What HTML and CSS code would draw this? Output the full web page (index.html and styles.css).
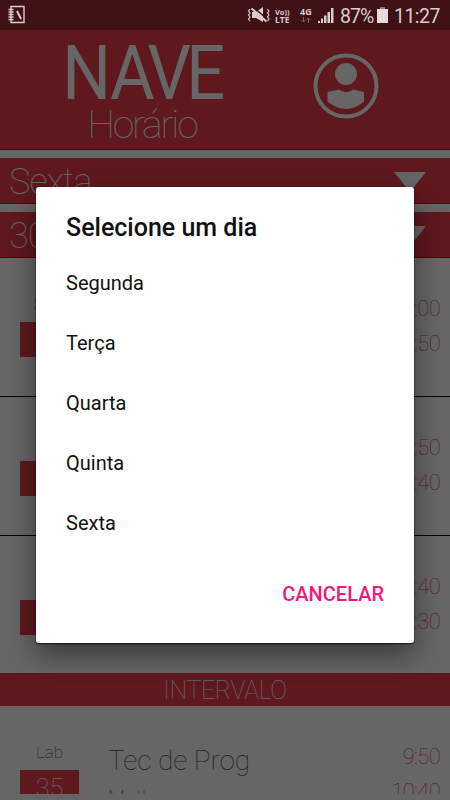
FILE: index.html
```
<!DOCTYPE html>
<html lang="pt-BR">
<head>
  <meta charset="UTF-8">
  <title>NAVE Horário</title>
  <link rel="stylesheet" href="styles.css">
</head>
<body>
  <div class="status">
    <svg class="note" width="18" height="20" viewBox="0 0 18 20" fill="none" stroke="#d9cccd">
      <path d="M3 1.500h13v16h-13z" stroke-width="1.400"/>
      <path d="M0.500 4.500h5M0.500 7h5M0.500 9.500h5M0.500 12h5M0.500 14.500h5" stroke-width="1.500"/>
      <path d="M9 6l4 8" stroke-width="2"/>
    </svg>
    <svg class="mute" width="24" height="18" viewBox="0 0 24 18">
      <path d="M5 6h4l7-5v15l-7-4h-4z" fill="#d9cccd"/>
      <path d="M6 1l14 12" stroke="#3f1115" stroke-width="1.500"/>
      <path d="M4.500 2.500l15 13" stroke="#d9cccd" stroke-width="2"/>
      <path d="M3 3l-1.500 2 1.500 2-1.500 2 1.500 2-1.500 2 1.500 2M20.500 3l1.500 2-1.500 2 1.500 2-1.500 2 1.500 2-1.500 2" fill="none" stroke="#d9cccd" stroke-width="1.200"/>
    </svg>
    <div class="volte"><span>Vo))</span><span class="lte">LTE</span></div>
    <div class="net">
      <span>4G</span>
      <svg width="10" height="6" viewBox="0 0 10 6" fill="none" stroke="#806467"><path d="M2.500 0v5M0.500 3l2 2 2-2M7.500 6v-5M5.500 3l2-2 2 2"/></svg>
    </div>
    <svg class="signal" width="16" height="16" viewBox="0 0 16 16" fill="#d9cccd">
      <path d="M0 14h2v2H0zM3 11.500h2V16H3zM6 8.500h2.500V16H6zM9.500 5h2.500v11H9.500zM13 1h2.500v15H13z"/>
    </svg>
    <span class="percent">87%</span>
    <svg class="battery" width="11" height="16" viewBox="0 0 11 16"><path d="M3 0h5v2H3z" fill="#917779"/><path d="M0 2h11v14H0z" fill="#e6dadb"/></svg>
    <span class="clock">11:27</span>
  </div>

  <div class="app">
    <header class="header">
      <div class="logo">
        <svg width="156" height="60" viewBox="0 0 156 60">
          <text class="nave" transform="scale(0.9 1)" x="-5.200 47.900 89.500 132.600" y="57">NAVE</text>
        </svg>
        <span class="horario">Horário</span>
      </div>
      <svg class="user" width="66" height="66" viewBox="0 0 66 66" fill="#fff">
        <circle cx="33" cy="33" r="30.500" fill="none" stroke="#fff" stroke-width="4"/>
        <circle cx="33" cy="21" r="11"/>
        <path d="M14.500 39l11.500-2.500q7 5 14 0l11 2.500v9.500q-18 15-36.500 0z"/>
      </svg>
    </header>
    <div class="select"><span>Sexta</span><i class="arrow"></i></div>
    <div class="select"><span>3001</span><i class="arrow"></i></div>

    <main class="list">
      <div class="row">
        <div class="room"><span>Sala</span><b>12</b></div>
        <div class="subject"></div>
        <div class="time"><span>7:00</span><span>7:50</span></div>
      </div>
      <div class="row">
        <div class="room"><span></span><b>12</b></div>
        <div class="subject"></div>
        <div class="time"><span>7:50</span><span>8:40</span></div>
      </div>
      <div class="row last">
        <div class="room"><span></span><b>12</b></div>
        <div class="subject"></div>
        <div class="time"><span>8:40</span><span>9:30</span></div>
      </div>
      <div class="break">INTERVALO</div>
      <div class="row">
        <div class="room"><span>Lab</span><b>35</b></div>
        <div class="subject"><span>Tec de Prog</span><small>Matheus</small></div>
        <div class="time"><span>9:50</span><span>10:40</span></div>
      </div>
    </main>
  </div>

  <div class="overlay">
    <div class="dialog">
      <h2>Selecione um dia</h2>
      <ul>
        <li>Segunda</li>
        <li>Terça</li>
        <li>Quarta</li>
        <li>Quinta</li>
        <li>Sexta</li>
      </ul>
      <button type="button" class="cancel">CANCELAR</button>
    </div>
  </div>
</body>
</html>
```
FILE: styles.css
```
* {
  box-sizing: border-box;
}

body {
  margin: 0;
  height: 800px;
  overflow: hidden;
  background-color: #fff;
  font-family: Roboto, sans-serif;
}

/* status bar */
.status {
  display: flex;
  align-items: center;
  height: 30px;
  padding: 0 10px 0 8px;
  background-color: #3f1115;
  color: #d9cccd;
}

.mute {
  margin-left: auto;
}

.volte {
  display: flex;
  flex-direction: column;
  width: 16px;
  margin: 1px 0 0 4px;
  font: bold 7.5px/8px "Open Sans", sans-serif;
}

.lte {
  font-size: 8.5px;
}

.net {
  display: flex;
  flex-direction: column;
  align-items: center;
  width: 14px;
  margin: 0 5px 0 8px;
  font: bold 9px/10px "Open Sans", sans-serif;
}

.percent {
  width: 35px;
  margin: 2px 2px 0 6px;
  font-size: 19.5px;
  letter-spacing: -0.9px;
}

.clock {
  margin: 2px 0 0 6px;
  font-size: 19.5px;
  letter-spacing: -0.5px;
}

/* app */
.app {
  display: flex;
  flex-direction: column;
  gap: 8px;
  height: 764px;
  overflow: hidden;
}

.header {
  display: flex;
  flex: none;
  height: 120px;
  padding: 0 71px 0 67px;
  justify-content: space-between;
  background-color: #eb3e4b;
  border-bottom: 1px solid #d8041a;
  color: #fff;
}

.logo {
  display: flex;
  flex-direction: column;
  align-items: center;
  padding-top: 12px;
}

.nave {
  fill: #fff;
  font-size: 76px;
}

.horario {
  margin: 2px 6px 0 0;
  font-size: 39px;
  line-height: 42px;
  font-weight: 100;
  letter-spacing: -2.2px;
}

.user {
  margin-top: 23px;
}

.select {
  display: flex;
  flex: none;
  justify-content: space-between;
  align-items: center;
  height: 46px;
  padding: 3px 24px 0 9px;
  background-color: #eb3e4b;
  border-bottom: 1px solid #d8041a;
  color: #fff;
  font-size: 36px;
  line-height: 42px;
  font-weight: 100;
  letter-spacing: -0.9px;
}

.arrow {
  border: 16px solid transparent;
  border-top: 20px solid #fff;
  border-bottom: 0;
}

.list {
  margin-top: -8px;
}

.row {
  display: flex;
  height: 139px;
  padding: 0 10px 0 20px;
  border-bottom: 1px solid #000;
}

.row.last {
  height: 137px;
  border: 0;
}

.room {
  display: flex;
  flex-direction: column;
  width: 59px;
  padding-top: 36px;
  text-align: center;
  color: #444;
}

.room span {
  height: 28px;
  font-size: 17px;
  line-height: 20px;
  font-weight: 100;
}

.room b {
  height: 35px;
  background-color: #eb3e4b;
  color: #fff;
  font-size: 25px;
  line-height: 37px;
  font-weight: 100;
}

.subject {
  display: flex;
  flex-direction: column;
  flex: 1;
  padding: 38px 0 0 29px;
  color: #555;
  font-weight: 100;
}

.subject span {
  font-size: 28px;
  line-height: 34px;
  letter-spacing: -0.1px;
}

.subject small {
  margin-top: 8px;
  font-size: 20px;
  line-height: 24px;
}

.time {
  display: flex;
  flex-direction: column;
  padding-top: 33px;
  text-align: right;
  color: #eb3e4b;
  font-size: 22px;
  line-height: 35px;
  font-weight: 100;
  letter-spacing: -0.7px;
}

.break {
  height: 33px;
  background-color: #eb3e4b;
  color: #fff;
  font-size: 25px;
  line-height: 35px;
  font-weight: 100;
  letter-spacing: -0.4px;
  text-align: center;
}

/* dialog */
.overlay {
  position: absolute;
  top: 30px;
  left: 0;
  width: 450px;
  height: 770px;
  padding: 157px 36px 0;
  background-color: rgba(0, 0, 0, 0.6);
}

.dialog {
  display: flex;
  flex-direction: column;
  height: 456px;
  padding: 23px 30px 0;
  background-color: #fff;
  border-radius: 3px;
  box-shadow: 0 1px 2px rgba(0, 0, 0, 0.7), 0 12px 28px rgba(0, 0, 0, 0.45);
}

.dialog h2 {
  margin: 0;
  font-size: 25px;
  line-height: 36px;
  font-weight: 500;
  color: #111;
}

.dialog ul {
  margin: 7px 0 0;
  padding: 0;
  list-style: none;
}

.dialog li {
  height: 60px;
  font-size: 20px;
  line-height: 60px;
  color: #111;
}

.cancel {
  align-self: flex-end;
  margin-top: 22px;
  padding: 0;
  border: none;
  background: none;
  color: #f0187a;
  font-family: Roboto, sans-serif;
  font-size: 20px;
  line-height: 38px;
  font-weight: 500;
}
```
